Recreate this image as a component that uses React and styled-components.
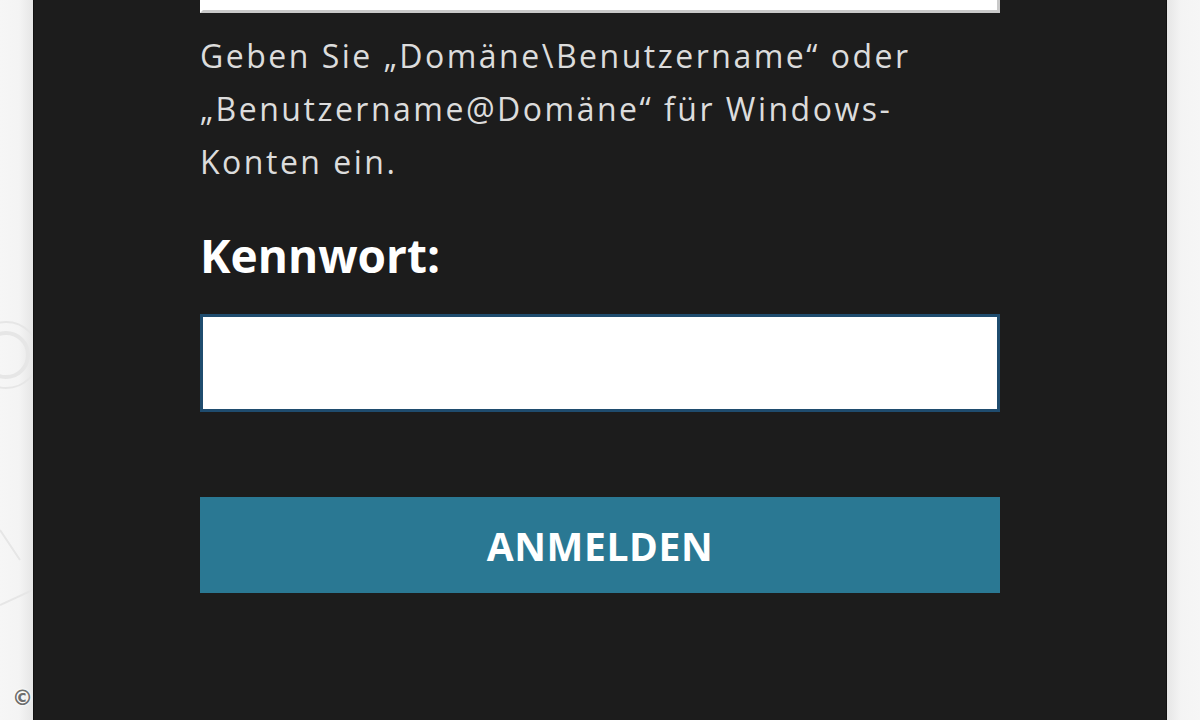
import React from 'react';
import styled, { createGlobalStyle } from 'styled-components';

const GlobalStyle = createGlobalStyle`
    html, body {
        margin: 0;
        padding: 0;
        height: 100%;
        overflow: hidden;
        background: #f3f3f3;
        font-family: "Open Sans", "Liberation Sans", sans-serif;
    }
`;

const Page = styled.div`
    display: flex;
    width: 1200px;
    height: 720px;
    overflow: hidden;
`;

const Gutter = styled.div`
    width: ${(p) => p.$width}px;
    flex-shrink: 0;
    display: flex;
    flex-direction: column;
    justify-content: space-between;
    align-items: center;
    background: linear-gradient(${(p) => (p.$side === 'left' ? 'to left' : 'to right')}, #e6e6e6 0, #f4f4f4 14px, #f6f6f6 100%);
`;

const Decor = styled.svg`
    margin-top: 150px;
`;

const Copyright = styled.span`
    margin-bottom: 10px;
    margin-left: 12px;
    font-family: "DejaVu Sans", sans-serif;
    font-size: 21px;
    font-weight: 700;
    color: #6e6e6e;
    text-shadow: 0 0 3px #fff, 0 0 2px #fff;
`;

const Panel = styled.main`
    flex: 1;
    background: #1c1c1c;
    padding: 0 166px;
    display: flex;
    flex-direction: column;
    border-left: 1px solid #111;
    border-right: 1px solid #111;
`;

const TextInput = styled.input`
    box-sizing: border-box;
    width: 800px;
    height: 98px;
    margin: 0;
    padding: 0 16px;
    background: #fff;
    border: 3px solid ${(p) => (p.$focused ? '#1f4c6e' : '#cfcfcf')};
    outline: none;
    font-family: inherit;
    font-size: 32px;
`;

const TopInput = styled(TextInput)`
    margin-top: -85px;
    border-color: #fff #c9c9c9 #c9c9c9 #fff;
`;

const Hint = styled.p`
    margin: 16px 0 0;
    width: 770px;
    color: #dcdcdc;
    font-size: 32px;
    line-height: 53px;
    letter-spacing: 2.5px;
`;

const Label = styled.label`
    margin-top: 41px;
    color: #fff;
    font-size: 46px;
    font-weight: 700;
    line-height: 52px;
`;

const PasswordInput = styled(TextInput)`
    margin-top: 33px;
`;

const SubmitButton = styled.button`
    box-sizing: border-box;
    width: 800px;
    height: 96px;
    margin-top: 85px;
    padding: 0;
    border: none;
    background: #2a7893;
    color: #fff;
    font-family: inherit;
    font-size: 39px;
    font-weight: 700;
    letter-spacing: 0.6px;
    cursor: pointer;
`;

const App = () => {
    return (
        <>
            <GlobalStyle />
            <Page>
                <Gutter $width={33} $side="left">
                    <Decor width="33" height="460" viewBox="0 0 33 460">
                        <g fill="none" stroke="#e6e6e6">
                            <circle cx="6" cy="205" r="22" strokeWidth="4" />
                            <circle cx="6" cy="205" r="33" strokeWidth="2" />
                            <path d="M0 455 L33 440" strokeWidth="2" />
                            <path d="M0 380 L20 410" strokeWidth="2" />
                        </g>
                    </Decor>
                    <Copyright>©</Copyright>
                </Gutter>
                <Panel>
                    <TopInput type="text" aria-label="Benutzername" />
                    <Hint>
                        Geben Sie „Domäne\Benutzername“ oder „Benutzername@Domäne“ für Windows-Konten ein.
                    </Hint>
                    <Label htmlFor="pw">Kennwort:</Label>
                    <PasswordInput id="pw" type="password" $focused />
                    <SubmitButton type="button">ANMELDEN</SubmitButton>
                </Panel>
                <Gutter $width={34} $side="right" />
            </Page>
        </>
    );
};

export default App;
